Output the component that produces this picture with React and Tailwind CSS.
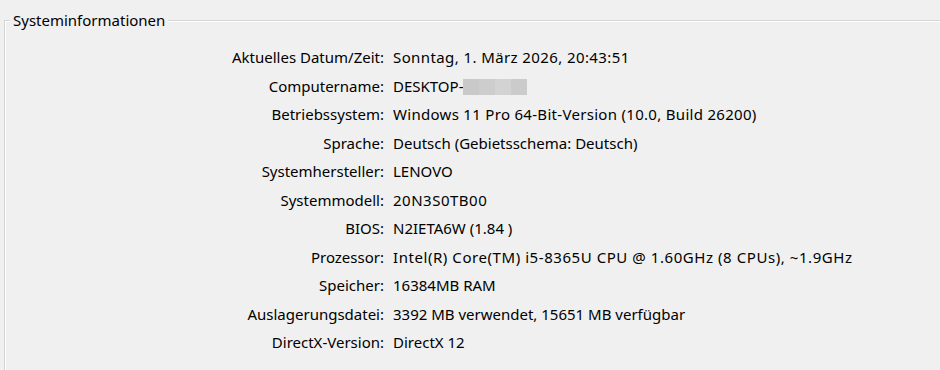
const rows = [
  ['Aktuelles Datum/Zeit:', 'Sonntag, 1. März 2026, 20:43:51', 'tracking-[0.4px]'],
  ['Computername:', 'DESKTOP-', ''],
  ['Betriebssystem:', 'Windows 11 Pro 64-Bit-Version (10.0, Build 26200)', 'tracking-[0.3px]'],
  ['Sprache:', 'Deutsch (Gebietsschema: Deutsch)', ''],
  ['Systemhersteller:', 'LENOVO', ''],
  ['Systemmodell:', '20N3S0TB00', 'tracking-[0.5px]'],
  ['BIOS:', 'N2IETA6W (1.84 )', ''],
  ['Prozessor:', 'Intel(R) Core(TM) i5-8365U CPU @ 1.60GHz (8 CPUs), ~1.9GHz', 'tracking-[0.56px]'],
  ['Speicher:', '16384MB RAM', ''],
  ['Auslagerungsdatei:', '3392 MB verwendet, 15651 MB verfügbar', ''],
  ['DirectX-Version:', 'DirectX 12', ''],
];

function Redacted() {
  // blurred-out part of the computer name
  return (
    <span className="inline-flex h-[16px] align-[-3px]">
      <span className="w-[16px] bg-[#c9c9c9]" />
      <span className="w-[16px] bg-[#cdcdcd]" />
      <span className="w-[16px] bg-[#d3d3d3]" />
      <span className="w-[16px] bg-[#cbcbcb]" />
    </span>
  );
}

export default function App() {
  return (
    <div className="h-[370px] overflow-hidden bg-[#f0f0f0] pt-[20px] pl-[4px] text-[15px] text-black font-['Segoe_UI','Noto_Sans',sans-serif]">
      <div className="h-full border-t border-l border-[#d5d5d5] shadow-[inset_1px_1px_0_#ffffff]">
        <div className="-mt-[11px] ml-[5px] w-fit bg-[#f0f0f0] px-[3px] leading-[20px]">
          Systeminformationen
        </div>
        <div className="mt-[13px] flex flex-col">
          {rows.map(([label, value, spacing]) => (
            <div key={label} className="flex h-[28.5px] items-center whitespace-nowrap">
              <div className="w-[379px] text-right">{label}</div>
              <div className={`pl-[9px] ${spacing}`}>
                {value}
                {label === 'Computername:' && <Redacted />}
              </div>
            </div>
          ))}
        </div>
      </div>
    </div>
  );
}
